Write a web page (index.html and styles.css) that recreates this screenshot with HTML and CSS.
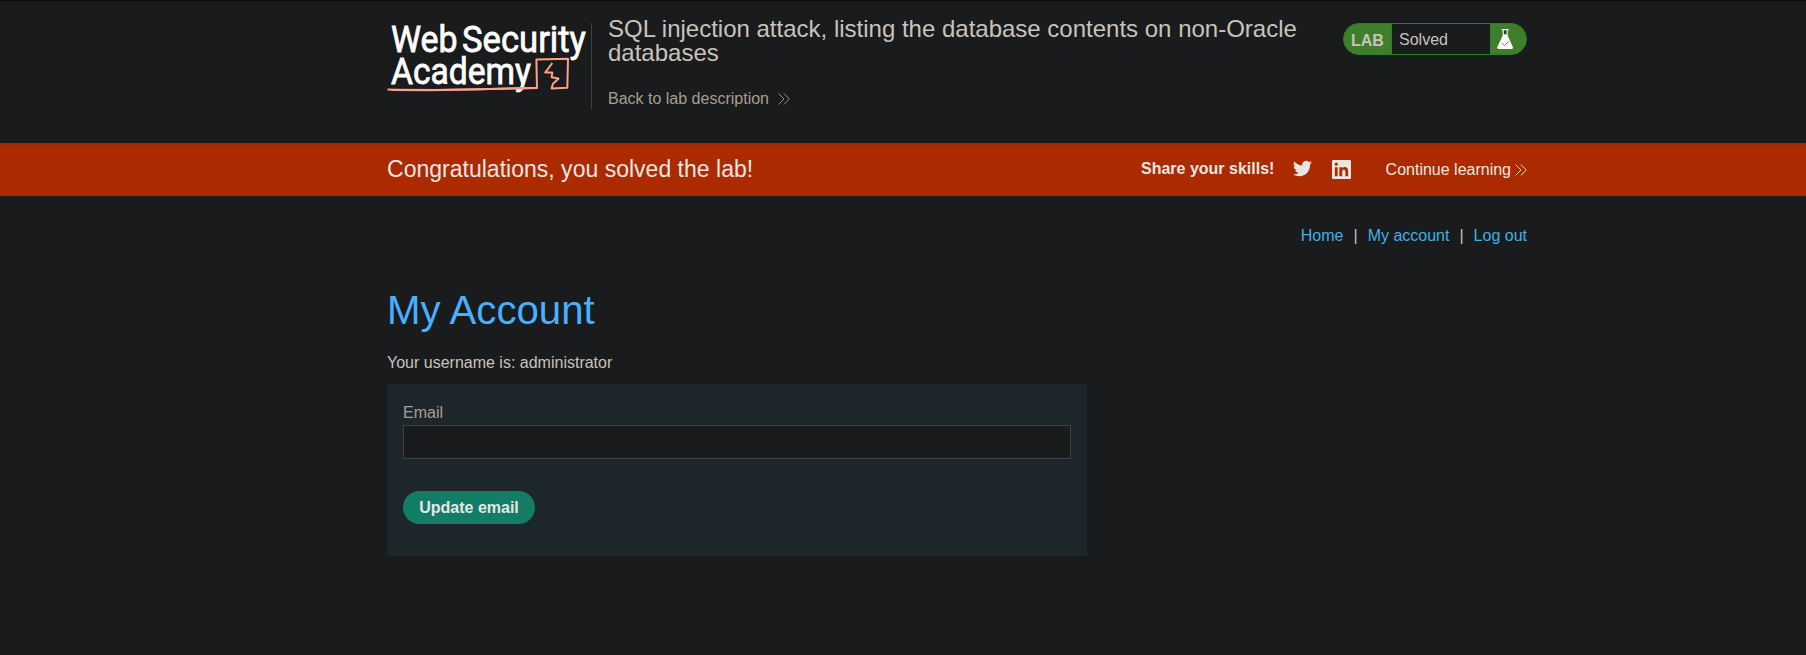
FILE: index.html
```html
<!DOCTYPE html>
<html lang="en">
<head>
<meta charset="utf-8">
<title>SQL injection attack, listing the database contents on non-Oracle databases</title>
<link rel="stylesheet" href="styles.css">
</head>
<body>
<header class="lab-header">
  <div class="container header-row">
    <svg class="logo" width="204" height="86" viewBox="387 23 204 86" role="img" aria-label="Web Security Academy">
      <g class="logo-text">
        <text x="391" y="51.7" textLength="66.500" lengthAdjust="spacingAndGlyphs">Web</text>
        <text x="462" y="51.7" textLength="124" lengthAdjust="spacingAndGlyphs">Security</text>
        <text x="391" y="83.7" textLength="140" lengthAdjust="spacingAndGlyphs">Academy</text>
      </g>
      <path class="logo-line" d="M387.5 89.6 395 89.7 440 89.9 480 89.2 537 88 536.4 59.4 568 58.7 567.3 87.7 551.6 88.4 553 83.8 558.6 78.6 551.6 77.3 552.3 72.6 545.2 72.6 552.3 63"/>
      <path class="logo-fill" d="M387 89 420 89.300 480 88.3 536 86.9V88.9L480 90.2 430 91.300 393 91Z"/>
    </svg>
    <div class="title-block">
      <h2 class="lab-title">SQL injection attack, listing the database contents on non-Oracle databases</h2>
      <a class="back-link">Back to lab description
        <svg class="chevrons" width="12" height="12" viewBox="0 0 12 12"><path d="M.6.5 6 6 .6 11.5M5.9.5 11.3 6 5.9 11.5"/></svg>
      </a>
    </div>
    <div class="lab-status">
      <span class="lab-tag">LAB</span>
      <span class="lab-state">Solved</span>
      <span class="lab-flask">
        <svg width="16" height="20" viewBox="0 0 16 20"><path fill="#fff" d="M4.8 0h6.8v1.2h-.9v5.3l5.1 11.4q.6 2.1-1.4 2.1H1.7Q-.3 20 .3 17.9L5.7 6.5V1.2h-.9Z"/><path fill="#1b4a20" d="M6.8 1.2h2.8v4.1H6.8Z"/><path class="tick" d="m5 14.2 2.4 2.3 4.4-4.1"/></svg>
      </span>
    </div>
  </div>
</header>
<section class="banner">
  <div class="container banner-row">
    <h4 class="congrats">Congratulations, you solved the lab!</h4>
    <span class="share">Share your skills!</span>
    <svg class="twitter" width="19" height="17" viewBox="0 2 24 20"><path d="M23.95 4.57a10 10 0 0 1-2.82.78 4.96 4.96 0 0 0 2.16-2.73c-.95.56-2 .96-3.13 1.19a4.92 4.92 0 0 0-8.38 4.48C7.69 8.1 4.07 6.13 1.64 3.16a4.92 4.92 0 0 0 1.52 6.57 4.9 4.9 0 0 1-2.23-.61v.06a4.92 4.92 0 0 0 3.95 4.83 5 5 0 0 1-2.21.08 4.94 4.94 0 0 0 4.6 3.42A9.87 9.87 0 0 1 0 19.54a13.99 13.99 0 0 0 7.55 2.21c9.05 0 14-7.5 14-13.98 0-.21 0-.42-.02-.63a9.94 9.94 0 0 0 2.42-2.57Z"/></svg>
    <svg class="linkedin" width="19" height="19" viewBox="0 0 24 24"><path fill-rule="evenodd" d="M1.5 0h21Q24 0 24 1.5v21q0 1.500-1.500 1.500h-21Q0 24 0 22.500v-21Q0 0 1.500 0ZM3.600 9v11.400h3.500V9Zm1.750-5.700a2.050 2.050 0 1 0 0 4.100 2.050 2.050 0 0 0 0-4.100ZM9.300 9v11.400h3.600v-5.700c0-3.700 4-3.500 4 0v5.700h3.500v-6.300c0-6-5.600-6.500-7.700-3.500V9Z"/></svg>
    <a class="continue">Continue learning
      <svg class="chevrons" width="12" height="12" viewBox="0 0 12 12"><path d="M.6.5 6 6 .6 11.5M5.900.5 11.300 6 5.900 11.500"/></svg>
    </a>
  </div>
</section>
<main class="container">
  <nav class="nav"><a>Home</a><span>|</span><a>My account</a><span>|</span><a>Log out</a></nav>
  <h1 class="page-title">My Account</h1>
  <p class="username">Your username is: administrator</p>
  <form class="email-form">
    <label for="email">Email</label>
    <input id="email" class="email-input" type="email">
    <button class="submit" type="button">Update email</button>
  </form>
</main>
</body>
</html>
```

FILE: styles.css
```css
* { box-sizing: border-box; }
body {
  margin: 0;
  min-height: 655px;
  background: #1a1b1c;
  color: #c8c3bc;
  font: 16px/18px "Liberation Sans", Arial, sans-serif;
}
h1, h2, h4, p { margin: 0; font-weight: 400; }
.container { width: 1140px; margin: 0 0 0 387px; }
.lab-header { height: 143px; border-top: 1px solid #0b0c0c; }
.header-row { display: flex; align-items: flex-start; }
.logo { margin-top: 22px; flex: none; overflow: visible; }
.logo-text { fill: #fff; stroke: #fff; stroke-width: .8px; font: 400 37.500px Roboto, sans-serif; }
.logo-line { fill: none; stroke: #ffa08a; stroke-width: 2px; stroke-linejoin: round; }
.logo-fill { fill: #ffa08a; }
.title-block {
  width: 735px;
  height: 86px;
  margin-top: 22px;
  padding-left: 16px;
  border-left: 1px solid #3c4042;
}
.lab-title { margin-top: -6px; font-size: 24px; line-height: 24px; }
.back-link { display: flex; align-items: center; gap: 9px; margin-top: 25px; color: #a69e91; }
.chevrons { fill: none; stroke: currentColor; stroke-width: .9px; }
.lab-status {
  display: flex;
  width: 184px;
  height: 32px;
  margin: 22px 0 0 17px;
  overflow: hidden;
  border: 1px solid #2a8025;
  border-radius: 16px;
  background: #3f7e2a;
}
.lab-tag { width: 47px; padding: 8px 0 0 7px; font-weight: 700; }
.lab-state { width: 100px; padding: 7px 0 0 7px; background: #1a1b1c; border: solid #2a8025; border-width: 0 1px; }
.lab-flask { padding: 5px 0 0 6px; }
.lab-flask svg { display: block; }
.tick { fill: none; stroke: #777; stroke-width: 1px; }
.banner { height: 53px; background: #ab2a00; border-top: 3px solid #a32900; color: #e8e6e3; }
.banner-row { display: flex; align-items: flex-start; }
.congrats { width: 754px; padding-top: 9px; font-size: 23.04px; line-height: 28px; }
.share { width: 152px; padding-top: 14px; font-weight: 700; }
.twitter { margin-top: 14px; fill: #e8e6e3; }
.linkedin { margin: 14px 0 0 20px; fill: #e8e6e3; }
.continue { display: flex; align-items: center; gap: 4px; margin: 15px 0 0 auto; }
.nav { display: flex; justify-content: flex-end; gap: 10px; padding-top: 31px; }
.nav a { color: #3fb0e4; }
.page-title { margin-top: 43px; color: #48b0ff; font-size: 40.2px; line-height: 46px; }
.username { margin-top: 20px; }
.email-form {
  display: flex;
  flex-direction: column;
  align-items: flex-start;
  width: 700px;
  height: 172px;
  margin-top: 12px;
  padding: 20px 16px;
  background: #1d272b;
  color: #a69e91;
}
.email-input { width: 668px; height: 34px; margin-top: 3px; border: 1px solid #3c4143; background: #1a1b1c; color: #c8c3bc; }
.submit {
  width: 132px;
  height: 33px;
  margin-top: 32px;
  padding: 0;
  border: 0;
  border-radius: 17px;
  background: #137d67;
  color: #e8e6e3;
  font: 700 16px/18px "Liberation Sans", Arial, sans-serif;
}
```
